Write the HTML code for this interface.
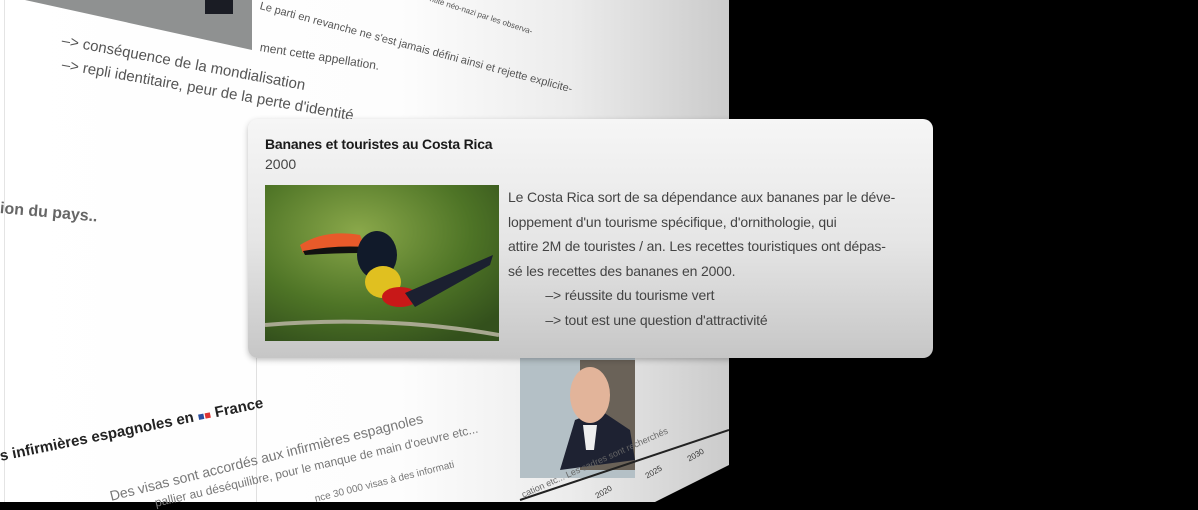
<!DOCTYPE html>
<html><head><meta charset="utf-8"><style>
*{margin:0;padding:0;box-sizing:border-box}
body{width:1198px;height:502px;overflow:hidden;background:#000;position:relative;font-family:"Liberation Sans",sans-serif}
.page{position:absolute;left:0;top:0;width:729px;height:502px;background:linear-gradient(90deg,#fff 0%,#fdfdfd 55%,#ececec 78%,#cbcbcb 100%)}
.t{position:absolute;white-space:nowrap;transform-origin:0 50%;color:#555}
.card{position:absolute;left:248px;top:119px;width:685px;height:239px;border-radius:10px;background:linear-gradient(180deg,#f6f6f6 0%,#e6e6e6 50%,#c6c6c6 100%);box-shadow:0 2px 6px rgba(0,0,0,.25)}
.card h1{position:absolute;left:17px;top:17px;font-size:14px;font-weight:bold;color:#1a1a1a;letter-spacing:-.2px}
.card .y{position:absolute;left:17px;top:37px;font-size:14px;color:#444}
.card .img{position:absolute;left:17px;top:66px;width:234px;height:156px;overflow:hidden}
.card .txt{position:absolute;left:260px;top:66px;font-size:14px;line-height:24.5px;color:#444;letter-spacing:-.15px}
</style></head><body>
<div class="page"></div>
<div style="position:absolute;left:4px;top:0;width:1px;height:502px;background:#e4e4e4"></div>
<div style="position:absolute;left:256px;top:350px;width:1px;height:152px;background:#e0e0e0"></div>
<svg style="position:absolute;left:0;top:0" width="729" height="502">
<polygon points="25,0 252,0 252,50" fill="#8f9191"/>
<rect x="205" y="0" width="28" height="14" fill="#1a1c24"/>
<polygon points="729,465 729,502 655,502" fill="#000"/>
<rect x="520" y="358" width="115" height="120" fill="#b4c0c6"/>
<rect x="580" y="360" width="55" height="110" fill="#6a6258"/>
<path d="M560,470 L575,420 L600,410 L630,430 L635,460Z" fill="#1e2232"/>
<ellipse cx="590" cy="395" rx="20" ry="28" fill="#e2b49a"/>
<path d="M583,425 L597,425 L594,450 L586,450Z" fill="#eee"/>
<line x1="520" y1="500" x2="729" y2="430" stroke="#222" stroke-width="2"/>
</svg>
<div class="t" style="left:260px;top:0;font-size:11px;transform:rotate(15deg)">Le parti en revanche ne s'est jamais défini ainsi et rejette explicite-</div>
<div class="t" style="left:260px;top:40px;font-size:12px;transform:rotate(9deg)">ment cette appellation.</div>
<div class="t" style="left:430px;top:-6px;font-size:8px;transform:rotate(18deg)">ntité néo-nazi par les observa-</div>
<div class="t" style="left:62px;top:32px;font-size:15px;transform:rotate(10.5deg)">–&gt; conséquence de la mondialisation</div>
<div class="t" style="left:62px;top:56px;font-size:15px;transform:rotate(10deg)">–&gt; repli identitaire, peur de la perte d'identité</div>
<div class="t" style="left:0;top:200px;font-size:16px;font-weight:bold;color:#666;transform:rotate(5deg)">ion du pays..</div>
<div class="t" style="left:0;top:448px;font-size:15px;font-weight:bold;color:#222;transform:rotate(-11.5deg)">s infirmières espagnoles en <span style="font-size:11px;color:#2b4fa0">■</span><span style="font-size:11px;color:#d33">■</span> France</div>
<div class="t" style="left:110px;top:488px;font-size:14px;color:#777;transform:rotate(-14deg)">Des visas sont accordés aux infirmières espagnoles</div>
<div class="t" style="left:155px;top:496px;font-size:12px;color:#777;transform:rotate(-13deg)">pallier au déséquilibre, pour le manque de main d'oeuvre etc...</div>
<div class="t" style="left:315px;top:494px;font-size:10px;color:#777;transform:rotate(-14deg)">nce 30 000 visas à des informati</div>
<div class="t" style="left:522px;top:490px;font-size:9px;color:#666;transform:rotate(-24deg)">cation etc... Les cadres sont recherchés</div>
<div class="t" style="left:596px;top:492px;font-size:8px;color:#333;transform:rotate(-30deg)">2020</div>
<div class="t" style="left:646px;top:472px;font-size:8px;color:#333;transform:rotate(-30deg)">2025</div>
<div class="t" style="left:688px;top:455px;font-size:8px;color:#333;transform:rotate(-30deg)">2030</div>
<div class="card">
<h1>Bananes et touristes au Costa Rica</h1>
<div class="y">2000</div>
<div class="img"><svg width="234" height="156">
<defs><radialGradient id="g" cx=".4" cy=".3" r=".8"><stop offset="0" stop-color="#8aa84a"/><stop offset=".6" stop-color="#4e7426"/><stop offset="1" stop-color="#33501c"/></radialGradient></defs>
<rect width="234" height="156" fill="url(#g)"/>
<path d="M35,60 Q60,44 95,50 L100,62 Q70,60 38,68Z" fill="#e85a2a"/>
<path d="M38,66 Q70,60 100,62 L98,68 Q70,68 40,70Z" fill="#111"/>
<ellipse cx="112" cy="70" rx="20" ry="24" fill="#111a2a"/>
<ellipse cx="118" cy="97" rx="18" ry="16" fill="#e0c020"/>
<ellipse cx="135" cy="112" rx="18" ry="10" fill="#c81818"/>
<path d="M140,108 L228,70 L225,80 L150,122Z" fill="#1b2030"/>
<path d="M0,140 Q120,130 234,150" stroke="#a8a890" stroke-width="4" fill="none"/>
</svg></div>
<div class="txt">Le Costa Rica sort de sa dépendance aux bananes par le déve-<br>loppement d'un tourisme spécifique, d'ornithologie, qui<br>attire 2M de touristes / an. Les recettes touristiques ont dépas-<br>sé les recettes des bananes en 2000.<br>&nbsp;&nbsp;&nbsp;&nbsp;&nbsp;&nbsp;&nbsp;&nbsp;&nbsp;&nbsp;–&gt; réussite du tourisme vert<br>&nbsp;&nbsp;&nbsp;&nbsp;&nbsp;&nbsp;&nbsp;&nbsp;&nbsp;&nbsp;–&gt; tout est une question d'attractivité</div>
</div>
</body></html>
